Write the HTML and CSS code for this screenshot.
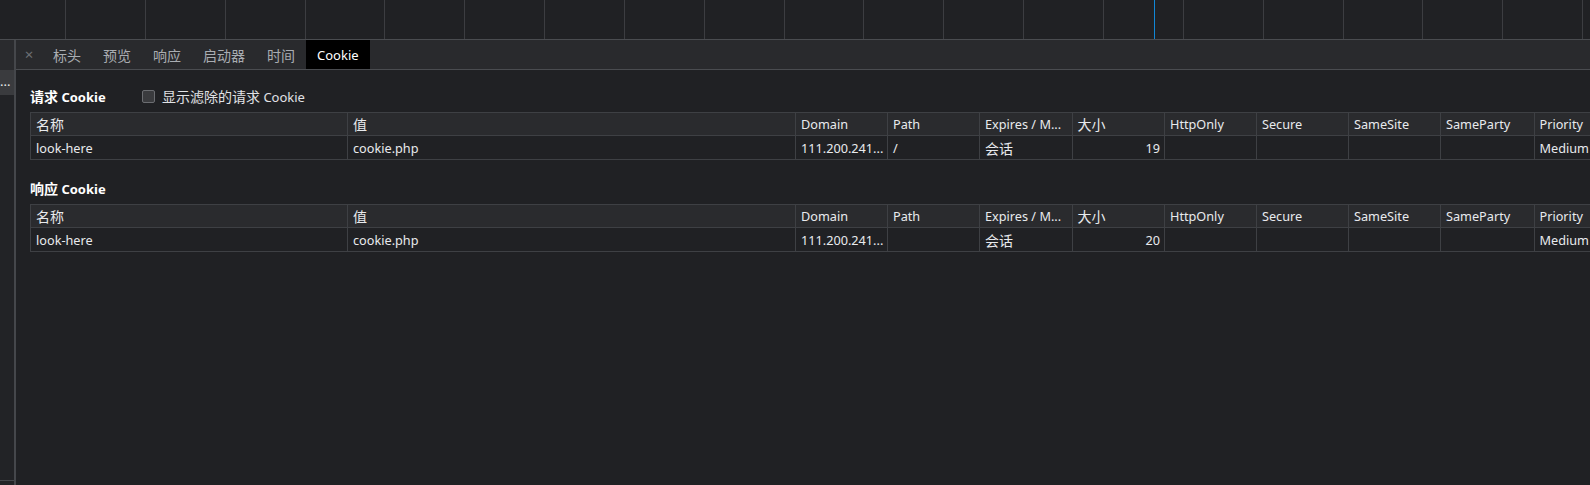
FILE: index.html
```html
<!DOCTYPE html>
<html lang="zh-CN">
<head>
<meta charset="utf-8">
<title>Cookie</title>
<link rel="stylesheet" href="styles.css">
</head>
<body>
<div class="timeline">
  <div class="tl-lead"></div>
  <div class="tl-cell"></div><div class="tl-cell"></div><div class="tl-cell"></div><div class="tl-cell"></div>
  <div class="tl-cell"></div><div class="tl-cell"></div><div class="tl-cell"></div><div class="tl-cell"></div>
  <div class="tl-cell"></div><div class="tl-cell"></div><div class="tl-cell"></div><div class="tl-cell"></div>
  <div class="tl-cell"></div><div class="tl-cell"></div><div class="tl-cell"></div><div class="tl-cell"></div>
  <div class="tl-cell"></div><div class="tl-cell"></div><div class="tl-cell"></div><div class="tl-cell"></div>
  <div class="tl-marker"></div>
</div>
<div class="main">
  <aside class="reqlist">
    <div class="req-head"></div>
    <div class="req-row selected">...</div>
    <div class="req-fill"></div>
    <div class="req-foot"></div>
  </aside>
  <section class="detail">
    <div class="tabbar">
      <div class="tab-close">×</div>
      <div class="tab zh">标头</div>
      <div class="tab zh">预览</div>
      <div class="tab zh">响应</div>
      <div class="tab zh">启动器</div>
      <div class="tab zh">时间</div>
      <div class="tab active">Cookie</div>
    </div>
    <div class="content">
      <div class="sec-head">
        <div class="sec-title"><span class="zh">请求</span> Cookie</div>
        <label class="check"><span class="box"></span><span><span class="zh">显示滤除的请求</span> Cookie</span></label>
      </div>
      <div class="grid">
        <div class="c h zh">名称</div><div class="c h zh">值</div><div class="c h">Domain</div><div class="c h">Path</div><div class="c h">Expires / M...</div><div class="c h zh">大小</div><div class="c h">HttpOnly</div><div class="c h">Secure</div><div class="c h">SameSite</div><div class="c h">SameParty</div><div class="c h">Priority</div>
        <div class="c">look-here</div><div class="c">cookie.php</div><div class="c">111.200.241...</div><div class="c">/</div><div class="c zh">会话</div><div class="c num">19</div><div class="c"></div><div class="c"></div><div class="c"></div><div class="c"></div><div class="c">Medium</div>
      </div>
      <div class="sec-head second">
        <div class="sec-title"><span class="zh">响应</span> Cookie</div>
      </div>
      <div class="grid">
        <div class="c h zh">名称</div><div class="c h zh">值</div><div class="c h">Domain</div><div class="c h">Path</div><div class="c h">Expires / M...</div><div class="c h zh">大小</div><div class="c h">HttpOnly</div><div class="c h">Secure</div><div class="c h">SameSite</div><div class="c h">SameParty</div><div class="c h">Priority</div>
        <div class="c">look-here</div><div class="c">cookie.php</div><div class="c">111.200.241...</div><div class="c"></div><div class="c zh">会话</div><div class="c num">20</div><div class="c"></div><div class="c"></div><div class="c"></div><div class="c"></div><div class="c">Medium</div>
      </div>
    </div>
  </section>
</div>
</body>
</html>
```
FILE: styles.css
```css
html, body {
  margin: 0;
  padding: 0;
}
body {
  width: 1590px;
  height: 485px;
  overflow: hidden;
  background: #202124;
  color: #e8eaed;
  font-family: "Noto Sans", "Noto Sans CJK SC", sans-serif;
  font-size: 13px;
}
.zh {
  font-family: "Noto Sans CJK SC", sans-serif;
  font-size: 14px;
}

/* timeline overview */
.timeline {
  position: relative;
  display: flex;
  height: 39px;
  border-bottom: 1px solid #4a4c50;
  background: #202124;
  overflow: hidden;
}
.tl-lead {
  flex: 0 0 65px;
}
.tl-cell {
  flex: 0 0 79.85px;
  box-sizing: border-box;
  border-left: 1px solid #3c3d41;
}
.tl-marker {
  position: absolute;
  left: 1154px;
  top: 0;
  width: 1px;
  height: 39px;
  background: #1187d6;
}

/* main */
.main {
  display: flex;
  height: 445px;
}
.reqlist {
  flex: 0 0 14px;
  display: flex;
  flex-direction: column;
  border-right: 2px solid #45474b;
  overflow: hidden;
  background: #222326;
}
.req-head {
  height: 30px;
  background: #2a2b2e;
}
.req-row {
  height: 25px;
  line-height: 23px;
  background: #3a3b3e;
  color: #e8eaed;
  white-space: nowrap;
  overflow: hidden;
  font-size: 13px;
}
.req-fill {
  flex: 1;
}
.req-foot {
  height: 4px;
  border-top: 1px solid #45474b;
}

.detail {
  flex: 1;
  min-width: 0;
  display: flex;
  flex-direction: column;
  overflow: hidden;
}
.tabbar {
  display: flex;
  height: 29px;
  background: #292a2d;
  border-bottom: 1px solid #4a4c50;
  align-items: stretch;
}
.tab-close {
  width: 26px;
  display: flex;
  align-items: center;
  justify-content: center;
  color: #6d7075;
  font-size: 15px;
  padding-bottom: 2px;
  box-sizing: border-box;
}
.tab {
  display: flex;
  align-items: center;
  padding: 0 11px;
  color: #a9adb2;
  white-space: nowrap;
}
.tab.active {
  background: #000000;
  color: #ffffff;
}

.content {
  padding: 14px 0 0 14px;
}
.sec-head {
  display: flex;
  align-items: center;
  height: 24px;
  margin-bottom: 4px;
}
.sec-head.second {
  margin-top: 16px;
}
.sec-title {
  width: 112px;
  font-weight: bold;
  color: #ffffff;
  font-size: 13px;
}
.sec-title .zh {
  font-weight: bold;
}
.check {
  display: flex;
  align-items: center;
  gap: 7px;
  color: #e0e2e5;
}
.box {
  width: 11px;
  height: 11px;
  border: 1px solid #6b6d71;
  border-radius: 2px;
  background: #3a3b3e;
}

.grid {
  display: grid;
  grid-template-columns: 317px 448px 92px 92px 92.5px 92.5px 92px 92px 92px 93.5px 160px;
  grid-template-rows: 23px 24px;
  border-top: 1px solid #3e4044;
  width: max-content;
}
.c {
  box-sizing: border-box;
  border-left: 1px solid #3e4044;
  border-bottom: 1px solid #3e4044;
  padding: 0 5px;
  display: flex;
  align-items: center;
  white-space: nowrap;
  overflow: hidden;
  color: #e8eaed;
  font-size: 12.7px;
}
.c.zh {
  font-size: 14px;
}
.c.h {
  background: #2a2b2e;
}
.c.num {
  justify-content: flex-end;
  padding-right: 4px;
}
```
